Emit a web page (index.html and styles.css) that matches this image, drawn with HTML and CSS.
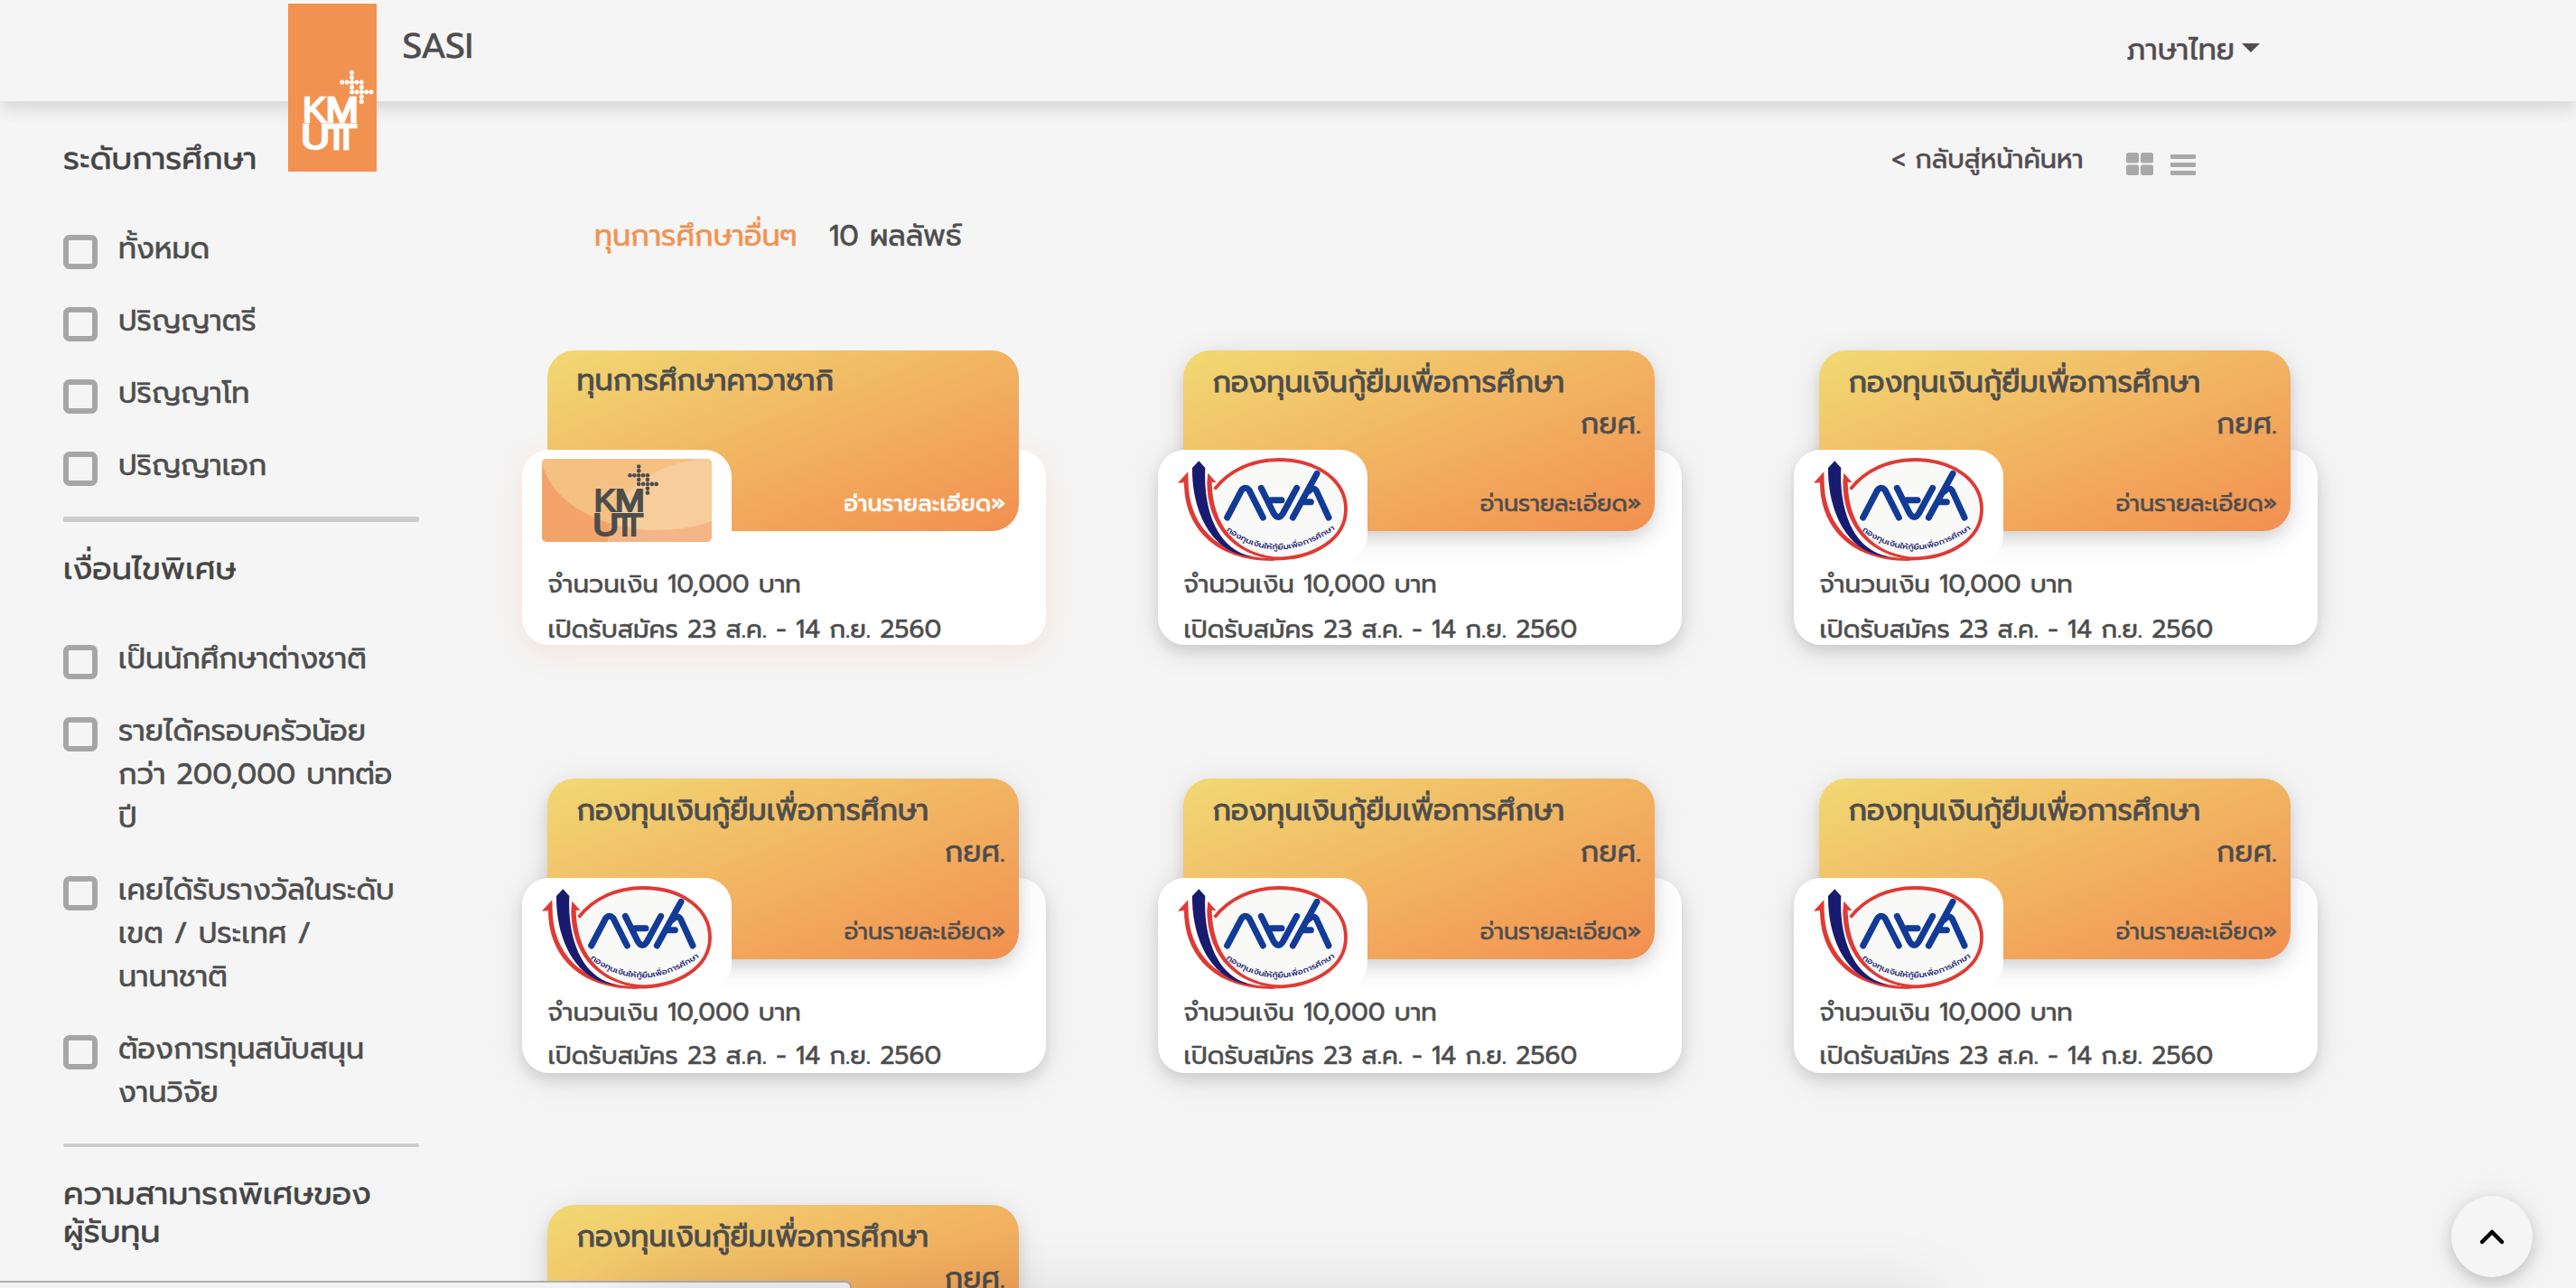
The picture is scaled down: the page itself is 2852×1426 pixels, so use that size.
FILE: index.html
```
<!DOCTYPE html>
<html lang="th">
<head>
<meta charset="utf-8">
<title>SASI</title>
<link rel="stylesheet" href="styles.css">
</head>
<body>
<svg class="defs" aria-hidden="true">
  <symbol id="kmutt" viewBox="100 225 245 278">
    <g fill="currentColor">
      <circle cx="266" cy="241" r="7.6"/><circle cx="266" cy="257" r="7.6"/>
      <circle cx="234" cy="273" r="7.6"/><circle cx="250" cy="273" r="7.6"/><circle cx="266" cy="273" r="7.6"/><circle cx="282" cy="273" r="7.6"/><circle cx="298" cy="273" r="7.6"/>
      <circle cx="266" cy="289" r="7.6"/><circle cx="298" cy="289" r="7.6"/>
      <circle cx="266" cy="305" r="7.6"/><circle cx="282" cy="305" r="7.6"/><circle cx="298" cy="305" r="7.6"/><circle cx="314" cy="305" r="7.6"/><circle cx="330" cy="305" r="7.6"/>
      <circle cx="298" cy="321" r="7.6"/><circle cx="298" cy="337" r="7.6"/>
      <g class="mark-text">
        <text x="103" y="404" textLength="78" lengthAdjust="spacingAndGlyphs">K</text>
        <text x="179" y="404" textLength="109" lengthAdjust="spacingAndGlyphs">M</text>
        <text x="98" y="494" textLength="95" lengthAdjust="spacingAndGlyphs">U</text>
        <text x="180" y="494">T</text>
        <text x="212" y="494">T</text>
      </g>
      <rect x="170" y="413" width="40" height="15"/>
    </g>
  </symbol>
  <symbol id="kys" viewBox="90 420 564 342">
    <ellipse cx="428" cy="590" rx="218" ry="164" fill="#f9f9f8"/>
    <path d="M212 524C262 460 340 426 425 426C560 426 648 500 648 590C648 688 545 755 410 755" fill="none" stroke="#e03a34" stroke-width="11.5"/>
    <path d="M124 466L90 503L111 502C111 650 212 762 405 762L430 754C232 758 127 650 125 500Z" fill="#e03a34"/>
    <path d="M190 470L218 502L203 500C205 640 280 745 440 750L420 758C270 745 187 640 187 500Z" fill="#e03a34"/>
    <path d="M138 453L160 430L181 453C174 600 225 728 340 748C205 742 136 600 138 453Z" fill="#191b70"/>
    <g fill="none" stroke="#123a97" stroke-width="21" stroke-linecap="round" stroke-linejoin="round">
      <path d="M254 618L302 527Q314 513 327 527L373 618"/>
      <path d="M367 520L408 603Q424 630 440 603L485 520M400 560H435"/>
      <path d="M472 618L552 472M524 531Q543 511 553 535L591 618M510 566H532"/>
    </g>
    <path id="kys-arc" d="M250 661Q420 790 614 655" fill="none"/>
    <text class="kys-text" fill="#191b70"><textPath href="#kys-arc" textLength="392" lengthAdjust="spacingAndGlyphs">กองทุนเงินให้กู้ยืมเพื่อการศึกษา</textPath></text>
  </symbol>
</svg>

<header class="topbar">
  <a class="brand-logo"><svg class="brand-mark"><use href="#kmutt"/></svg></a>
  <span class="brand-name">SASI</span>
  <a class="language">ภาษาไทย<i class="caret"></i></a>
</header>

<main class="layout">
  <aside class="filters">
    <h2>ระดับการศึกษา</h2>
    <ul>
      <li><i class="box"></i><span>ทั้งหมด</span></li>
      <li><i class="box"></i><span>ปริญญาตรี</span></li>
      <li><i class="box"></i><span>ปริญญาโท</span></li>
      <li><i class="box"></i><span>ปริญญาเอก</span></li>
    </ul>
    <hr class="thick">
    <h2>เงื่อนไขพิเศษ</h2>
    <ul>
      <li><i class="box"></i><span>เป็นนักศึกษาต่างชาติ</span></li>
      <li><i class="box"></i><span>รายได้ครอบครัวน้อย<br>กว่า 200,000 บาทต่อ<br>ปี</span></li>
      <li><i class="box"></i><span>เคยได้รับรางวัลในระดับ<br>เขต / ประเทศ /<br>นานาชาติ</span></li>
      <li><i class="box"></i><span>ต้องการทุนสนับสนุน<br>งานวิจัย</span></li>
    </ul>
    <hr>
    <h2>ความสามารถพิเศษของ<br>ผู้รับทุน</h2>
  </aside>

  <section class="results">
    <div class="toolbar">
      <a class="back">&lt; กลับสู่หน้าค้นหา</a>
      <svg class="view-grid" viewBox="0 0 30 25"><rect width="14" height="11.5" rx="2.5"/><rect x="16" width="14" height="11.5" rx="2.5"/><rect y="13.5" width="14" height="11.5" rx="2.5"/><rect x="16" y="13.5" width="14" height="11.5" rx="2.5"/></svg>
      <svg class="view-list" viewBox="0 0 28 23"><rect width="28" height="5" rx="1"/><rect y="9" width="28" height="5" rx="1"/><rect y="18" width="28" height="5" rx="1"/></svg>
    </div>
    <div class="summary"><span class="category">ทุนการศึกษาอื่นๆ</span><span>10 ผลลัพธ์</span></div>

    <div class="cards">
      <article class="card active">
        <div class="info"><p>จำนวนเงิน 10,000 บาท</p><p>เปิดรับสมัคร 23 ส.ค. - 14 ก.ย. 2560</p></div>
        <div class="cover"><h3>ทุนการศึกษาคาวาซากิ</h3><a class="more">อ่านรายละเอียด»</a></div>
        <div class="thumb">
          <svg class="kmutt-thumb" viewBox="0 0 188 92">
            <rect width="188" height="92" fill="#f3a369"/>
            <ellipse cx="128" cy="-10" rx="130" ry="89" fill="#f5c182"/>
            <ellipse cx="188" cy="92" rx="115" ry="92" fill="#fff" opacity=".2"/>
            <use href="#kmutt" x="56.5" y="3.6" width="75" height="84.5"/>
          </svg>
        </div>
      </article>
      <article class="card">
        <div class="info"><p>จำนวนเงิน 10,000 บาท</p><p>เปิดรับสมัคร 23 ส.ค. - 14 ก.ย. 2560</p></div>
        <div class="cover"><h3>กองทุนเงินกู้ยืมเพื่อการศึกษา</h3><span class="owner">กยศ.</span><a class="more">อ่านรายละเอียด»</a></div>
        <div class="thumb"><svg class="kys-thumb"><use href="#kys"/></svg></div>
      </article>
      <article class="card">
        <div class="info"><p>จำนวนเงิน 10,000 บาท</p><p>เปิดรับสมัคร 23 ส.ค. - 14 ก.ย. 2560</p></div>
        <div class="cover"><h3>กองทุนเงินกู้ยืมเพื่อการศึกษา</h3><span class="owner">กยศ.</span><a class="more">อ่านรายละเอียด»</a></div>
        <div class="thumb"><svg class="kys-thumb"><use href="#kys"/></svg></div>
      </article>
      <article class="card tight">
        <div class="info"><p>จำนวนเงิน 10,000 บาท</p><p>เปิดรับสมัคร 23 ส.ค. - 14 ก.ย. 2560</p></div>
        <div class="cover"><h3>กองทุนเงินกู้ยืมเพื่อการศึกษา</h3><span class="owner">กยศ.</span><a class="more">อ่านรายละเอียด»</a></div>
        <div class="thumb"><svg class="kys-thumb"><use href="#kys"/></svg></div>
      </article>
      <article class="card tight">
        <div class="info"><p>จำนวนเงิน 10,000 บาท</p><p>เปิดรับสมัคร 23 ส.ค. - 14 ก.ย. 2560</p></div>
        <div class="cover"><h3>กองทุนเงินกู้ยืมเพื่อการศึกษา</h3><span class="owner">กยศ.</span><a class="more">อ่านรายละเอียด»</a></div>
        <div class="thumb"><svg class="kys-thumb"><use href="#kys"/></svg></div>
      </article>
      <article class="card tight">
        <div class="info"><p>จำนวนเงิน 10,000 บาท</p><p>เปิดรับสมัคร 23 ส.ค. - 14 ก.ย. 2560</p></div>
        <div class="cover"><h3>กองทุนเงินกู้ยืมเพื่อการศึกษา</h3><span class="owner">กยศ.</span><a class="more">อ่านรายละเอียด»</a></div>
        <div class="thumb"><svg class="kys-thumb"><use href="#kys"/></svg></div>
      </article>
      <article class="card">
        <div class="cover"><h3>กองทุนเงินกู้ยืมเพื่อการศึกษา</h3><span class="owner">กยศ.</span></div>
      </article>
    </div>
  </section>
</main>

<button class="to-top" aria-label="top"><svg viewBox="0 0 90 90"><path d="M34 51L45 40L56 51" fill="none" stroke="#000" stroke-width="4.5" stroke-linecap="round" stroke-linejoin="round"/></svg></button>
<div class="status"></div>
<div class="edge-shade"></div>
</body>
</html>
```
FILE: styles.css
```
* { box-sizing: border-box; }

body {
  margin: 0;
  height: 1426px;
  overflow: hidden;
  position: relative;
  background: #f5f5f5;
  color: #4d4d4d;
  font: 400 32px/48px Prompt, "Noto Sans", sans-serif;
  -webkit-text-stroke: .5px currentColor;
}

h2, h3, p, ul { margin: 0; padding: 0; font-weight: 400; }
svg { display: block; -webkit-text-stroke: 0; }
.defs { position: absolute; width: 0; height: 0; }

.mark-text {
  font: 400 116px "Liberation Sans", sans-serif;
  stroke: currentColor;
  stroke-width: 7px;
}
.kys-text { font: 500 26px Prompt, "Noto Sans", sans-serif; }

/* Top bar */
.topbar {
  position: relative;
  z-index: 2;
  display: flex;
  align-items: flex-start;
  height: 112px;
  padding-left: 319px;
  background: #f5f5f5;
  box-shadow: 0 8px 16px rgba(0, 0, 0, .11), 0 4px 36px rgba(0, 0, 0, .03);
}
.brand-logo {
  width: 98px;
  height: 186px;
  margin-top: 4px;
  padding: 71px 0 0 15px;
  background: #f29251;
  color: #fff;
}
.brand-mark { width: 82px; height: 93px; }
.brand-name { margin: 27px 0 0 28.5px; font-size: 39px; }
.language {
  display: flex;
  margin: 32px 350px 0 auto;
  color: #524b50;
}
.caret {
  margin: 16px 0 0 8px;
  border: 10px solid transparent;
  border-top-color: currentColor;
  border-bottom: 0;
  height: 10px;
}

/* Page columns */
.layout { display: flex; }
.filters { width: 578px; padding: 43px 114px 0 70px; flex: none; }
.filters h2 { font-size: 35.2px; line-height: 42px; color: #444; white-space: nowrap; }
.filters ul {
  display: flex;
  flex-direction: column;
  gap: 32px;
  margin: 55px 0 32px;
  list-style: none;
}
.filters li { display: flex; gap: 23px; white-space: nowrap; }
.box {
  flex: none;
  width: 38px;
  height: 38px;
  margin-top: 8px;
  border: 6px solid #a6a6a6;
  border-radius: 7px;
}
.filters hr { height: 4px; margin: 0 0 31px; border: 0; border-radius: 2px; background: #ccc; }
.filters .thick { height: 6px; }

.results { flex: 1; padding-top: 41px; }
.toolbar { display: flex; height: 48px; padding-left: 1516px; color: #524b50; font-size: 28.8px; }
.toolbar svg { fill: #a8a8a8; }
.back { white-space: pre; }
.view-grid { width: 30px; height: 25px; margin: 16px 0 0 47px; }
.view-list { width: 28px; height: 23px; margin: 18px 0 0 19px; }
.summary { display: flex; gap: 35px; margin: 37px 0 102px; padding-left: 80px; }
.category { color: #f29251; }

/* Scholarship cards */
.cards {
  display: grid;
  grid-template-columns: repeat(3, 580px);
  grid-template-rows: 474px 472px 474px;
  column-gap: 124px;
}
.card { display: grid; grid-template: 326px / 580px; }
.card > * { grid-area: 1 / 1; }
.info, .cover { box-shadow: 0 8px 15px rgba(0, 0, 0, .1), 0 6px 36px rgba(0, 0, 0, .1); }
.info {
  height: 216px;
  margin-top: 110px;
  padding: 124px 0 0 28.5px;
  border-radius: 30px;
  background: #fff;
  font-size: 27.9px;
  line-height: 50px;
  white-space: nowrap;
}
.tight .info p + p { margin-top: -2px; }
.cover {
  display: flex;
  flex-direction: column;
  align-items: flex-end;
  width: 522px;
  height: 200px;
  margin-left: 28px;
  padding: 13px 15px 11px 32.5px;
  border-radius: 30px;
  background: linear-gradient(to bottom right, #f1d973, #f28f50);
  line-height: 46px;
}
.cover h3 { align-self: flex-start; font-size: 32px; -webkit-text-stroke-width: .8px; }
.more { margin-top: auto; font-size: 25.6px; line-height: 38px; }
.thumb {
  width: 232px;
  height: 124px;
  margin-top: 110px;
  padding: 10px 0 0 22px;
  border-radius: 30px;
  background: #fff;
}
.kmutt-thumb { width: 188px; height: 92px; border-radius: 5px; color: #4d4d4d; }
.kys-thumb { width: 188px; height: 114px; margin-top: -1px; }

.active .info { box-shadow: 0 8px 30px rgba(242, 146, 81, .16); }
.active .cover { padding-top: 11px; box-shadow: none; }
.active .more { color: #fff; font-weight: 500; font-size: 25.2px; -webkit-text-stroke-width: .3px; }

/* Overlays */
.to-top {
  position: absolute;
  left: 2714px;
  top: 1324px;
  width: 90px;
  height: 90px;
  padding: 0;
  border: 0;
  border-radius: 50%;
  background: #f5f5f5;
  box-shadow: 0 6px 15px rgba(0, 0, 0, .15), 0 4px 36px rgba(0, 0, 0, .1);
}
.status {
  position: absolute;
  left: 0;
  bottom: 0;
  width: 943px;
  height: 8px;
  border: solid #adadad;
  border-width: 2px 2px 0 0;
  border-radius: 0 7px 0 0;
  background: #f3f3f3;
}
.edge-shade {
  position: absolute;
  left: 690px;
  top: 1436px;
  width: 1450px;
  height: 100px;
  box-shadow: 0 0 80px rgba(0, 0, 0, .13);
}
```
